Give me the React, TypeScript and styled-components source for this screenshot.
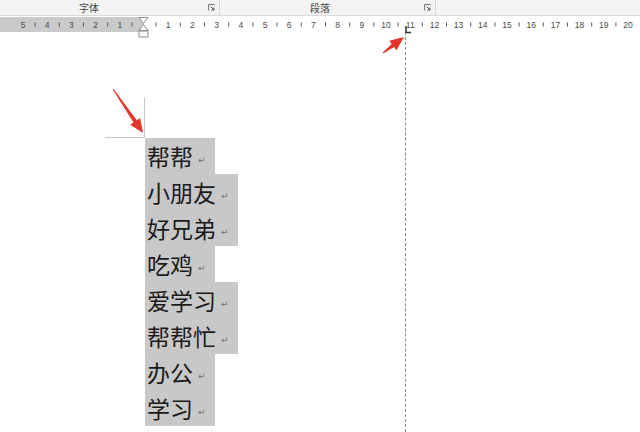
import React from "react";
import styled, { createGlobalStyle } from "styled-components";

const GlobalStyle = createGlobalStyle`
  html, body { margin: 0; padding: 0; background: #fff; }
  body { font-family: "Noto Sans CJK SC", "Noto Sans", sans-serif; }
`;

const UNIT = 24.2;
const ZERO = 144;

const Page = styled.div`
  position: relative;
  width: 640px;
  height: 432px;
  overflow: hidden;
  background: #fff;
`;

const GroupBar = styled.div`
  display: flex;
  height: 15px;
  background: #f3f3f3;
  border-bottom: 1px solid #dadada;
`;

const Group = styled.div<{ $w?: number }>`
  flex: ${(p) => (p.$w ? `0 0 ${p.$w}px` : "1")};
  display: flex;
  align-items: center;
  border-right: ${(p) => (p.$w ? "1px solid #d6d6d6" : "none")};
  box-sizing: border-box;
  padding-right: 4px;
`;

const GroupLabel = styled.span<{ $shift?: number }>`
  flex: 1;
  text-align: center;
  font-size: 10px;
  line-height: 15px;
  color: #454545;
  padding-right: ${(p) => p.$shift ?? 0}px;
`;

const Launcher = () => (
  <svg width="7" height="7" viewBox="0 0 7 7">
    <path d="M0.5 6.5 V0.5 H6.5" fill="none" stroke="#7a7a7a" strokeWidth="1" />
    <path d="M2.5 2.5 L6 6 M6 3.5 V6 H3.5" fill="none" stroke="#555" strokeWidth="1" />
  </svg>
);

const Ruler = styled.div`
  position: relative;
  display: flex;
  height: 15px;
  margin-top: 1px;
`;

const RulerMargin = styled.div`
  flex: 0 0 ${ZERO}px;
  background: #cacaca;
`;

const RulerTrack = styled.div`
  flex: 1;
  background: #fff;
`;

const RulerScale = styled.svg`
  position: absolute;
  left: 0;
  top: 0;
`;

const ScaleText = styled.text`
  font-family: "Liberation Sans", Arial, sans-serif;
  font-size: 8.5px;
  fill: #4a4a4a;
`;

const Marker = styled.svg`
  position: absolute;
  left: 0;
  top: 0;
  overflow: visible;
  pointer-events: none;
`;

const Doc = styled.div`
  padding-top: 65px;
`;

const Corner = styled.div`
  box-sizing: border-box;
  width: 40px;
  height: 41px;
  margin-left: 105px;
  border-right: 1px solid #c6c6c6;
  border-bottom: 1px solid #c6c6c6;
`;

const Lines = styled.div`
  margin-left: 145px;
`;

const Line = styled.div`
  width: fit-content;
  height: 36px;
  padding-left: 2px;
  display: flex;
  align-items: center;
  background: #c8c8c8;
  font-size: 23px;
  line-height: 36px;
  color: #1a1a1a;
`;

const Mark = styled.span`
  display: inline-block;
  width: 22px;
  padding-left: 5px;
  box-sizing: border-box;
  font-family: "DejaVu Sans", sans-serif;
  font-size: 9px;
  line-height: 9px;
  color: #6e6e6e;
  margin-top: 8px;
`;

const TabGuide = styled.div`
  position: absolute;
  left: 405px;
  top: 32px;
  bottom: 0;
  border-left: 1px dashed #8a8a8a;
`;

const Arrow = ({ x1, y1, x2, y2 }: { x1: number; y1: number; x2: number; y2: number }) => {
  const dx = x2 - x1;
  const dy = y2 - y1;
  const len = Math.hypot(dx, dy);
  const ux = dx / len;
  const uy = dy / len;
  const nx = -uy;
  const ny = ux;
  const head = 14;
  const hw = 6;
  const sw = 2;
  const ax = x2 - ux * head;
  const ay = y2 - uy * head;
  const pts = [
    [x1 + nx * 0.5, y1 + ny * 0.5],
    [ax + nx * sw, ay + ny * sw],
    [ax + nx * hw, ay + ny * hw],
    [x2, y2],
    [ax - nx * hw, ay - ny * hw],
    [ax - nx * sw, ay - ny * sw],
    [x1 - nx * 0.5, y1 - ny * 0.5],
  ]
    .map((p) => p.map((v) => v.toFixed(1)).join(","))
    .join(" ");
  return <polygon points={pts} fill="#e3342b" />;
};

const words = ["帮帮", "小朋友", "好兄弟", "吃鸡", "爱学习", "帮帮忙", "办公", "学习"];

export default function App() {
  const nums: React.ReactNode[] = [];
  for (let n = -5; n <= 20; n++) {
    const x = ZERO + n * UNIT;
    if (n !== 0) {
      nums.push(
        <ScaleText key={`n${n}`} x={x} y={10.5} textAnchor="middle">
          {Math.abs(n)}
        </ScaleText>
      );
    }
    const hx = x + UNIT / 2;
    if (hx < 640) nums.push(<rect key={`t${n}`} x={hx - 0.5} y={5.5} width={1} height={4} fill="#555" />);
  }

  return (
    <Page>
      <GlobalStyle />
      <GroupBar>
        <Group $w={220}>
          <GroupLabel $shift={30}>字体</GroupLabel>
          <Launcher />
        </Group>
        <Group $w={216}>
          <GroupLabel $shift={4}>段落</GroupLabel>
          <Launcher />
        </Group>
        <Group />
      </GroupBar>
      <Ruler>
        <RulerMargin />
        <RulerTrack />
        <RulerScale width="640" height="15" viewBox="0 0 640 15">
          {nums}
        </RulerScale>
      </Ruler>
      <Doc>
        <Corner />
        <Lines>
          {words.map((w, i) => (
            <Line key={i}>
              {w}
              <Mark>↵</Mark>
            </Line>
          ))}
        </Lines>
      </Doc>
      <TabGuide />
      <Marker width="640" height="432" viewBox="0 0 640 432">
        <path d="M139 17.5 H148 L143.5 23.5 Z" fill="#fff" stroke="#8a8a8a" strokeWidth="1" />
        <path d="M143.5 24.5 L148 30.5 H139 Z" fill="#fff" stroke="#8a8a8a" strokeWidth="1" />
        <rect x="139" y="31" width="9" height="6" fill="#fff" stroke="#8a8a8a" strokeWidth="1" />
        <path d="M406 26 V32.5 H411" fill="none" stroke="#333" strokeWidth="1.5" />
        <Arrow x1={113} y1={89} x2={143} y2={133} />
        <Arrow x1={383} y1={53} x2={404} y2={37} />
      </Marker>
    </Page>
  );
}
